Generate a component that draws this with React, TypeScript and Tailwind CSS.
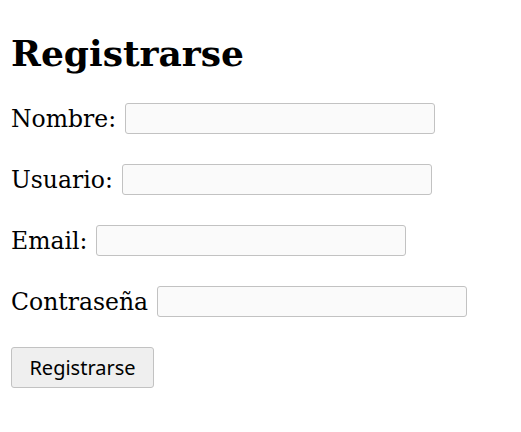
import React from "react";

const serif = { fontFamily: '"DejaVu Serif", serif' };

function Row({ label }: { label: string }) {
  return (
    <div className="flex items-center gap-[9px] h-[31px] text-[23.5px] leading-[28px] text-black">
      <span className="whitespace-pre">{label}</span>
      <input
        type="text"
        className="w-[310px] h-[31px] border border-[#c2c2c2] bg-[#fafafa] rounded-[3px] outline-none"
      />
    </div>
  );
}

export default function App() {
  return (
    <div className="min-h-[432px] bg-white pl-[11px] pr-[8px] text-black" style={serif}>
      <h1 className="pt-[32px] text-[36px] leading-[42px] font-bold">Registrarse</h1>
      <div className="mt-[29px] flex flex-col gap-[30px]">
        <Row label="Nombre:" />
        <Row label="Usuario:" />
        <Row label="Email:" />
        <Row label="Contraseña" />
        <div>
          <button
            type="button"
            className="h-[41px] w-[143px] border border-[#c2c2c2] bg-[#efefef] rounded-[3px] text-[20px] leading-[24px] text-black"
            style={{ fontFamily: '"Noto Sans", sans-serif' }}
          >
            Registrarse
          </button>
        </div>
      </div>
    </div>
  );
}
